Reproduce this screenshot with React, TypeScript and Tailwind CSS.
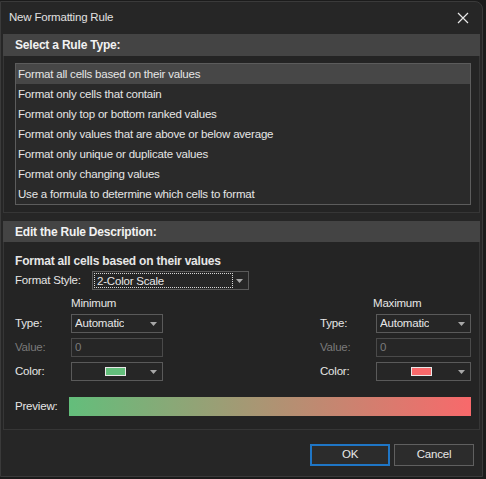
import React, { useState } from 'react';

const RULE_TYPES = [
  'Format all cells based on their values',
  'Format only cells that contain',
  'Format only top or bottom ranked values',
  'Format only values that are above or below average',
  'Format only unique or duplicate values',
  'Format only changing values',
  'Use a formula to determine which cells to format',
];

const font = { fontFamily: '"Liberation Sans", Arial, sans-serif' };

function Arrow() {
  return (
    <svg width="7" height="4" viewBox="0 0 7 4" className="shrink-0">
      <path d="M0 0 H7 L3.5 4 Z" fill="#a8a8a8" />
    </svg>
  );
}

function Dropdown({ value, width }: { value: string; width: string }) {
  return (
    <div className={`${width} h-[19px] flex items-center justify-between border border-[#5a5a5a] bg-[#262626] pl-[3px] pr-[5px]`}>
      <span className="truncate">{value}</span>
      <Arrow />
    </div>
  );
}

function ColorPick({ color, width }: { color: string; width: string }) {
  return (
    <div className={`${width} h-[19px] flex items-center border border-[#5a5a5a] bg-[#262626] pr-[5px]`}>
      <div className="flex-1 flex justify-center pl-[8px]">
        <div className="w-[21px] h-[9px] border border-[#e8e8e8]" style={{ backgroundColor: color }} />
      </div>
      <Arrow />
    </div>
  );
}

function ValueColumn({ title, color, labelW, boxW, titleClass }: { title: string; color: string; labelW: string; boxW: string; titleClass: string }) {
  return (
    <div className="flex flex-col">
      <div className={`h-[24px] leading-[26px] ${titleClass}`}>{title}</div>
      <div className="flex items-center">
        <span className={labelW}>Type:</span>
        <Dropdown value="Automatic" width={boxW} />
      </div>
      <div className="flex items-center mt-[5px]">
        <span className={`${labelW} text-[#7a7a7a]`}>Value:</span>
        <div className={`${boxW} h-[19px] border border-[#4a4a4a] bg-[#262626] pl-[3px] leading-[17px] text-[#7a7a7a]`}>0</div>
      </div>
      <div className="flex items-center mt-[5px]">
        <span className={labelW}>Color:</span>
        <ColorPick color={color} width={boxW} />
      </div>
    </div>
  );
}

export default function App() {
  const [selected, setSelected] = useState(0);

  return (
    <div className="w-[486px] h-[479px] bg-[#1b1b1b] text-[11.5px] tracking-[-0.2px] text-[#e6e6e6] overflow-hidden" style={font}>
      <div className="mt-px w-[483px] h-[476px] bg-[#262626] border border-[#3a3a3a] rounded-tr-[8px] flex flex-col">
        {/* Title bar */}
        <div className="h-[32px] shrink-0 flex items-center justify-between pl-[8px] pr-[13px]">
          <span className="text-[#e0e0e0]">New Formatting Rule</span>
          <svg width="12" height="12" viewBox="0 0 12 12">
            <path d="M1 1 L11 11 M11 1 L1 11" stroke="#e8e8e8" strokeWidth="1.2" />
          </svg>
        </div>

        <div className="px-[2px] flex flex-col">
          {/* Section 1 */}
          <div className="h-[22px] bg-[#444444] pl-[12px] flex items-center font-bold text-[12px] text-[#f2f2f2]">Select a Rule Type:</div>
          <div className="h-[157px] bg-[#242424] border-x border-b border-[#363636] pl-[11px] pr-[8px] pt-[7px]">
            <div className="border border-[#5c5c5c] bg-[#2a2a2a] flex flex-col">
              {RULE_TYPES.map((t, i) => (
                <div
                  key={t}
                  onClick={() => setSelected(i)}
                  className={`h-[20px] leading-[20px] pl-[2px] cursor-default ${i === selected ? 'bg-[#474747]' : ''}`}
                >
                  {t}
                </div>
              ))}
            </div>
          </div>

          {/* Section 2 */}
          <div className="mt-[8px] h-[21px] bg-[#444444] pl-[12px] flex items-center font-bold text-[12px] text-[#f2f2f2]">Edit the Rule Description:</div>
          <div className="h-[188px] bg-[#242424] border-x border-b border-[#363636] pl-[11px] pr-[8px] pt-[9px]">
            <div className="h-[20px] leading-[20px] font-bold text-[12px]">Format all cells based on their values</div>
            <div className="flex items-center">
              <span className="w-[77px]">Format Style:</span>
              <div className="w-[157px] h-[19px] flex items-center border border-[#5a5a5a] bg-[#262626] p-px pr-[5px]">
                <div className="w-[139px] h-full border border-dotted border-[#d8d8d8] pl-[2px] leading-[15px]">2-Color Scale</div>
                <div className="flex-1 flex justify-end">
                  <Arrow />
                </div>
              </div>
            </div>

            <div className="flex justify-between">
              <ValueColumn title="Minimum" color="#63be7b" labelW="w-[56px]" boxW="w-[92px]" titleClass="pl-[56px]" />
              <ValueColumn title="Maximum" color="#f8696b" labelW="w-[56px]" boxW="w-[95px]" titleClass="pl-[53px]" />
            </div>

            <div className="flex items-center mt-[16px]">
              <span className="w-[54px]">Preview:</span>
              <div className="flex-1 h-[19px]" style={{ background: 'linear-gradient(to right, #63be7b, #f8696b)' }} />
            </div>
          </div>
        </div>

        {/* Footer */}
        <div className="flex justify-end gap-[4px] pr-[8px] mt-[14px]">
          <button className="w-[80px] h-[22px] border-2 border-[#1f76c6] bg-[#2c2c2c] text-[#e8e8e8]">OK</button>
          <button className="w-[80px] h-[22px] border border-[#606060] bg-[#2c2c2c] text-[#e8e8e8]">Cancel</button>
        </div>
      </div>
    </div>
  );
}
